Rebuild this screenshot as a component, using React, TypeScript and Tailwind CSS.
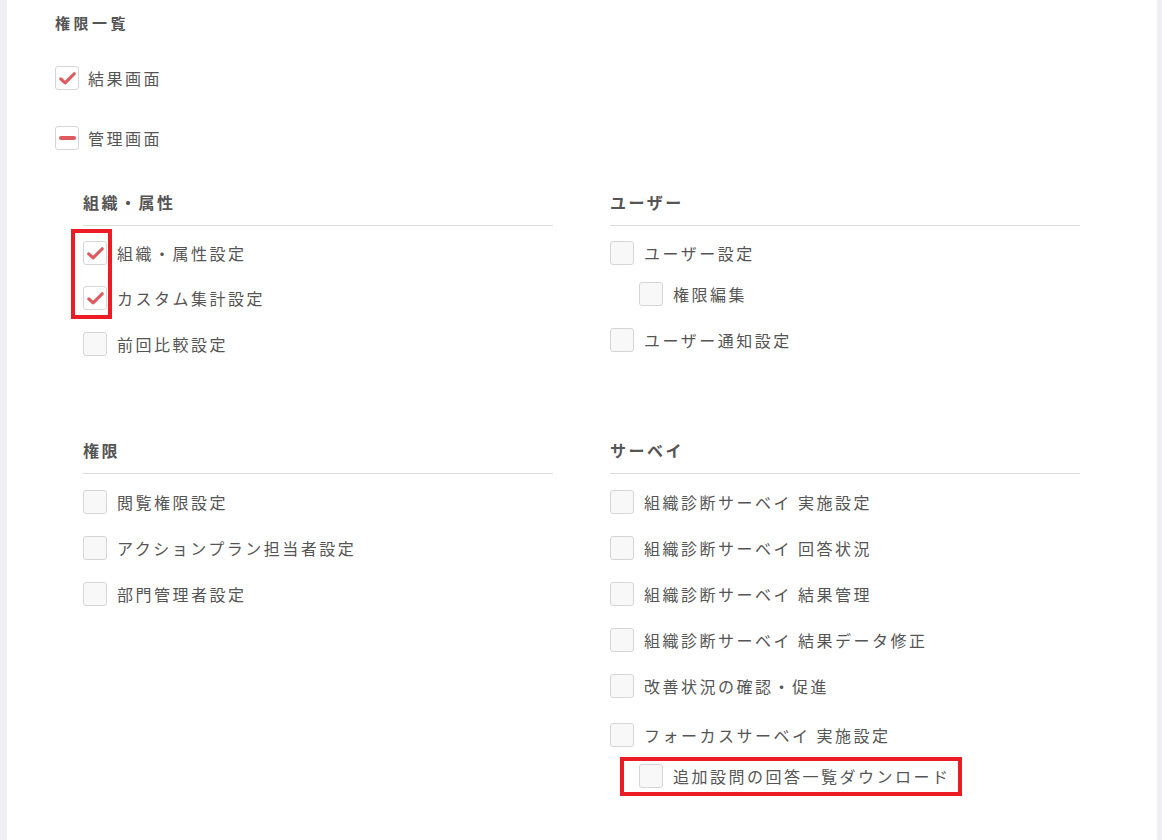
import React from "react";

function Box({ state }: { state?: "checked" | "partial" | "empty" }) {
  const filled = state === "checked" || state === "partial";
  return (
    <span
      className={`grid h-6 w-6 shrink-0 place-items-center rounded-[3px] border border-[#d6d6d6] ${
        filled ? "bg-white" : "bg-[#f8f8f8]"
      }`}
    >
      {state === "checked" && (
        <svg viewBox="0 0 24 24" className="h-[19px] w-[19px]">
          <path d="M3.5 12.5l5.5 5 11.5-11.5" fill="none" stroke="#de5a5e" strokeWidth="4" strokeLinecap="round" strokeLinejoin="round" />
        </svg>
      )}
      {state === "partial" && <span className="h-[4px] w-[17px] rounded-sm bg-[#de5a5e]" />}
    </span>
  );
}

function Row({ label, state, className = "" }: { label: string; state?: "checked" | "partial" | "empty"; className?: string }) {
  return (
    <div className={`flex h-6 items-center gap-[10px] ${className}`}>
      <Box state={state} />
      <span className="text-[16px] leading-6 tracking-[2.5px] text-[#555]">{label}</span>
    </div>
  );
}

function Heading({ children }: { children: React.ReactNode }) {
  return (
    <div className="border-b border-[#dcdcdc] pb-[11px] text-[16px] font-bold leading-6 tracking-[2.5px] text-[#555]">
      {children}
    </div>
  );
}

export default function App() {
  return (
    <div className="min-h-screen bg-[#f0f0f4] pl-[7px] pr-[5px] font-['Noto_Sans_CJK_JP','Noto_Sans',sans-serif]">
      <div className="min-h-[840px] bg-white pl-[48px] pt-[11px]">
        <div className="text-[15px] font-bold leading-6 tracking-[3.5px] text-[#555]">権限一覧</div>

        <Row label="結果画面" state="checked" className="mt-[31px] !gap-[9px]" />
        <Row label="管理画面" state="partial" className="mt-[36px] !gap-[9px]" />

        <div className="ml-[28px] mt-[40px] grid w-[997px] grid-cols-[470px_470px] gap-x-[57px]">
          {/* 組織・属性 */}
          <div>
            <Heading>組織・属性</Heading>
            <div className="relative mt-[15px]">
              <span className="absolute left-[-12px] top-[-12px] h-[90px] w-[41px] border-4 border-[#ec1c24]" />
              <Row label="組織・属性設定" state="checked" />
              <Row label="カスタム集計設定" state="checked" className="mt-[21px]" />
            </div>
            <Row label="前回比較設定" className="mt-[22px]" />
          </div>

          {/* ユーザー */}
          <div>
            <Heading>ユーザー</Heading>
            <Row label="ユーザー設定" className="mt-[15px]" />
            <Row label="権限編集" className="ml-[29px] mt-[17px]" />
            <Row label="ユーザー通知設定" className="mt-[22px]" />
          </div>

          {/* 権限 */}
          <div className="mt-[82px]">
            <Heading>権限</Heading>
            <Row label="閲覧権限設定" className="mt-[16px]" />
            <Row label="アクションプラン担当者設定" className="mt-[22px]" />
            <Row label="部門管理者設定" className="mt-[22px]" />
          </div>

          {/* サーベイ */}
          <div className="mt-[82px]">
            <Heading>サーベイ</Heading>
            <Row label="組織診断サーベイ 実施設定" className="mt-[16px]" />
            <Row label="組織診断サーベイ 回答状況" className="mt-[22px]" />
            <Row label="組織診断サーベイ 結果管理" className="mt-[22px]" />
            <Row label="組織診断サーベイ 結果データ修正" className="mt-[22px]" />
            <Row label="改善状況の確認・促進" className="mt-[22px]" />
            <Row label="フォーカスサーベイ 実施設定" className="mt-[25px]" />
            <div className="relative ml-[29px] mt-[17px]">
              <span className="absolute left-[-19px] top-[-7px] h-[39px] w-[342px] border-4 border-[#ec1c24]" />
              <Row label="追加設問の回答一覧ダウンロード" />
            </div>
          </div>
        </div>
      </div>
    </div>
  );
}
